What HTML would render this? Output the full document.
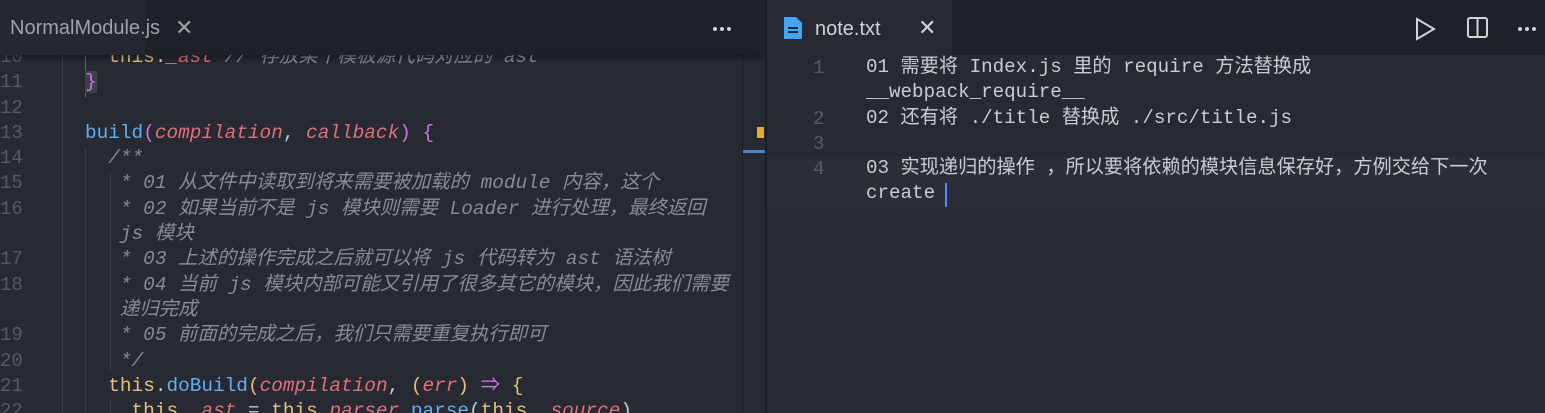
<!DOCTYPE html>
<html><head><meta charset="utf-8"><style>
*{margin:0;padding:0;box-sizing:border-box}
html,body{width:1545px;height:413px;overflow:hidden}
body{background:#272a33;font-family:"Liberation Mono","Noto Sans CJK SC",monospace;position:relative}
.abs{position:absolute}
.tabbar{top:0;height:55px;background:#1f2128}
.ln{position:absolute;color:#555b66;font-size:19px;white-space:pre}
.code{position:absolute;font-size:19.4px;white-space:pre;color:#c5cad3}
.c{color:#868c97;font-style:italic}
.fn{color:#61afef}.p{color:#e0707a;font-style:italic}.y{color:#e5c07b}.m{color:#c678dd}.t{color:#e5c07b}
.tabtxt{font-family:"Liberation Sans",sans-serif;font-size:20px;color:#b8bcc4}
.guide{position:absolute;width:1px;background:#3a3e48}
.dots{position:absolute;top:27px;display:flex;gap:3px}
.dots i{display:block;width:4px;height:4px;border-radius:2px;background:#d0d3d8}
</style></head><body>
<!-- left editor -->
<div class="guide" style="left:62px;top:55px;height:358px"></div>
<div class="guide" style="left:85px;top:55px;height:42px;background:#666"></div>
<div class="guide" style="left:85px;top:147px;height:266px"></div>
<div class="guide" style="left:110px;top:172px;height:200px"></div>
<div class="guide" style="left:110px;top:400px;height:13px"></div>
<div class="abs" style="left:742px;top:55px;width:1px;height:358px;background:#1c1e24"></div>
<div class="abs" style="left:757px;top:127px;width:7px;height:11px;background:#e8a82a"></div>
<div class="abs" style="left:743px;top:150px;width:22px;height:3px;background:#4f7fcf"></div>
<div class="ln" style="left:0;top:45px;line-height:25.3px">10
11
12
13
14
15
16

17
18

19
20
21
22</div>
<div class="code" style="left:85px;top:45px;line-height:25.3px"><span class="t">  this</span>.<span class="p">_ast</span> <span class="c">// 存放某个模板源代码对应的 ast</span>
<span class="m" style="background:#3d414b">}</span>

<span class="fn">build</span><span class="m">(</span><span class="p">compilation</span>, <span class="p">callback</span><span class="m">)</span> <span class="m">{</span>
<span class="c">  /**
   * 01 从文件中读取到将来需要被加载的 module 内容，这个
   * 02 如果当前不是 js 模块则需要 Loader 进行处理，最终返回
   js 模块
   * 03 上述的操作完成之后就可以将 js 代码转为 ast 语法树
   * 04 当前 js 模块内部可能又引用了很多其它的模块，因此我们需要
   递归完成
   * 05 前面的完成之后，我们只需要重复执行即可
   */</span>
  <span class="t">this</span>.<span class="fn">doBuild</span><span class="y">(</span><span class="p">compilation</span>, <span class="y">(</span><span class="p">err</span><span class="y">)</span> <span class="m">⇒</span> <span class="y">{</span>
    <span class="t">this</span>.<span class="p">_ast</span> = <span class="t">this</span>.<span class="p">parser</span>.<span class="fn">parse</span>(<span class="t">this</span>.<span class="p">_source</span>)</div>
<!-- left tab bar -->
<div class="abs tabbar" style="left:0;width:765px;box-shadow:0 3px 6px rgba(0,0,0,0.4)"></div>
<div class="abs" style="left:0;top:0;width:145px;height:55px;background:#252830"></div>
<div class="abs tabtxt" style="left:10px;top:17px;color:#9da2ab">NormalModule.js</div>
<div class="abs tabtxt" style="left:175px;top:15px;font-size:22px;color:#9da2ab">✕</div>
<div class="dots" style="left:713px"><i></i><i></i><i></i></div>
<!-- divider -->
<div class="abs" style="left:765px;top:0;width:2px;height:413px;background:#1b1d22"></div>
<!-- right tab bar -->
<div class="abs tabbar" style="left:767px;width:778px"></div>
<div class="abs" style="left:767px;top:0;width:185px;height:55px;background:#272a33"></div>
<svg class="abs" style="left:783px;top:16px" width="20" height="24" viewBox="0 0 20 24"><path d="M2 1h11l6 6v15a1 1 0 0 1-1 1H2a1 1 0 0 1-1-1V2a1 1 0 0 1 1-1z" fill="#42a5f5"/><rect x="5" y="11" width="10" height="2" fill="#1f2a3a"/><rect x="5" y="15" width="10" height="2" fill="#1f2a3a"/></svg>
<div class="abs tabtxt" style="left:815px;top:18px;color:#d0d3d8">note.txt</div>
<div class="abs tabtxt" style="left:918px;top:15px;font-size:22px;color:#d0d3d8">✕</div>
<svg class="abs" style="left:1413px;top:17px" width="24" height="24" viewBox="0 0 24 24"><path d="M4 2l17 10L4 22z" fill="none" stroke="#d0d3d8" stroke-width="2"/></svg>
<svg class="abs" style="left:1466px;top:16px" width="24" height="24" viewBox="0 0 24 24"><rect x="2" y="2" width="19" height="19" rx="2" fill="none" stroke="#d0d3d8" stroke-width="2"/><path d="M11.5 2v19" stroke="#d0d3d8" stroke-width="2"/></svg>
<div class="dots" style="left:1518px"><i></i><i></i><i></i></div>
<!-- right editor -->
<div class="abs" style="left:767px;top:157px;width:778px;height:51px;background:#2b2e37"></div>
<div class="ln" style="left:813px;top:56px;line-height:25.3px">1

2
3
4</div>
<div class="code" style="left:866px;top:55px;line-height:25.3px;color:#c9ccd2;font-size:19.2px">01 需要将 Index.js 里的 require 方法替换成
__webpack_require__
02 还有将 ./title 替换成 ./src/title.js

03 实现递归的操作 ，所以要将依赖的模块信息保存好，方例交给下一次
create</div>
<div class="abs" style="left:945px;top:183px;width:2px;height:24px;background:#528bff"></div>
</body></html>
